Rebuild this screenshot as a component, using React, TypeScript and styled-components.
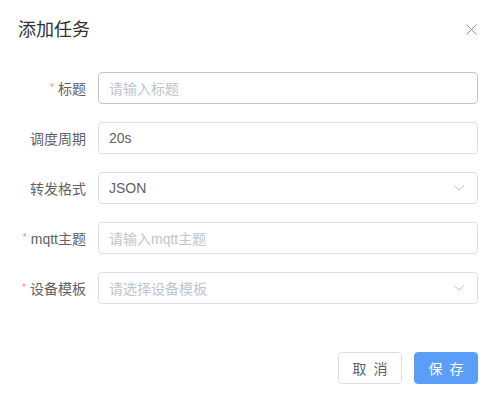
import styled, { createGlobalStyle } from 'styled-components';

const GlobalStyle = createGlobalStyle`
  html, body {
    margin: 0;
    padding: 0;
    background: #ffffff;
  }
  body {
    font-family: "Liberation Sans", "Noto Sans CJK SC", sans-serif;
  }
  * {
    box-sizing: border-box;
  }
`;

const Dialog = styled.div`
  width: 494px;
  height: 404px;
  background: #ffffff;
  padding: 18px 16px 0 18px;
`;

const Header = styled.div`
  display: flex;
  align-items: center;
  justify-content: space-between;
  height: 24px;
`;

const Title = styled.span`
  font-size: 18px;
  line-height: 24px;
  color: #303133;
`;

const CloseButton = styled.button`
  width: 16px;
  height: 16px;
  margin-right: -1px;
  margin-top: -2px;
  padding: 0;
  border: none;
  background: none;
  display: flex;
  align-items: center;
  justify-content: center;
  color: #909399;
  cursor: pointer;
`;

const Form = styled.div`
  padding-top: 30px;
`;

const Row = styled.div`
  display: flex;
  align-items: center;
  height: 32px;
  margin-bottom: 18px;
`;

const Label = styled.label<{ $required?: boolean }>`
  width: 80px;
  flex-shrink: 0;
  padding-right: 12px;
  text-align: right;
  font-size: 14px;
  color: #606266;
  &::before {
    content: ${(p) => (p.$required ? '"*"' : 'none')};
    color: #f78989;
    margin-right: 4px;
    font-size: 10px;
    vertical-align: 3px;
  }
`;

const Field = styled.div<{ $hover?: boolean }>`
  flex: 1;
  height: 32px;
  display: flex;
  align-items: center;
  padding: 0 12px 0 10px;
  border: 1px solid ${(p) => (p.$hover ? '#c0c4cc' : '#dcdfe6')};
  border-radius: 4px;
  background: #ffffff;
`;

const Value = styled.span<{ $placeholder?: boolean }>`
  flex: 1;
  font-size: 14px;
  color: ${(p) => (p.$placeholder ? '#c0c4cc' : '#606266')};
`;

const Footer = styled.div`
  display: flex;
  justify-content: flex-end;
  gap: 12px;
  padding-top: 30px;
`;

const Button = styled.button<{ $primary?: boolean }>`
  width: 64px;
  height: 32px;
  padding: 0 0 0 2px;
  border-radius: 4px;
  font-family: "Noto Sans CJK SC", sans-serif;
  font-size: 14px;
  letter-spacing: 2px;
  border: 1px solid ${(p) => (p.$primary ? '#5a9ef7' : '#dcdfe6')};
  background: ${(p) => (p.$primary ? '#5a9ef7' : '#ffffff')};
  color: ${(p) => (p.$primary ? '#ffffff' : '#606266')};
  cursor: pointer;
`;

const Chevron = () => (
  <svg width="12" height="8" viewBox="0 0 12 8" fill="none">
    <path d="M1 1.5 L6 6 L11 1.5" stroke="#c0c4cc" strokeWidth="1" />
  </svg>
);

const CloseIcon = () => (
  <svg width="11" height="11" viewBox="0 0 11 11" fill="none">
    <path d="M0.5 0.5 L10.5 10.5 M10.5 0.5 L0.5 10.5" stroke="currentColor" strokeWidth="1" />
  </svg>
);

const fields = [
  { label: '标题', required: true, text: '请输入标题', placeholder: true, select: false, hover: true },
  { label: '调度周期', required: false, text: '20s', placeholder: false, select: false },
  { label: '转发格式', required: false, text: 'JSON', placeholder: false, select: true },
  { label: 'mqtt主题', required: true, text: '请输入mqtt主题', placeholder: true, select: false },
  { label: '设备模板', required: true, text: '请选择设备模板', placeholder: true, select: true },
];

export default function App() {
  return (
    <>
      <GlobalStyle />
      <Dialog>
        <Header>
          <Title>添加任务</Title>
          <CloseButton aria-label="关闭">
            <CloseIcon />
          </CloseButton>
        </Header>
        <Form>
          {fields.map((f) => (
            <Row key={f.label}>
              <Label $required={f.required}>{f.label}</Label>
              <Field $hover={f.hover}>
                <Value $placeholder={f.placeholder}>{f.text}</Value>
                {f.select && <Chevron />}
              </Field>
            </Row>
          ))}
        </Form>
        <Footer>
          <Button>取 消</Button>
          <Button $primary>保 存</Button>
        </Footer>
      </Dialog>
    </>
  );
}
